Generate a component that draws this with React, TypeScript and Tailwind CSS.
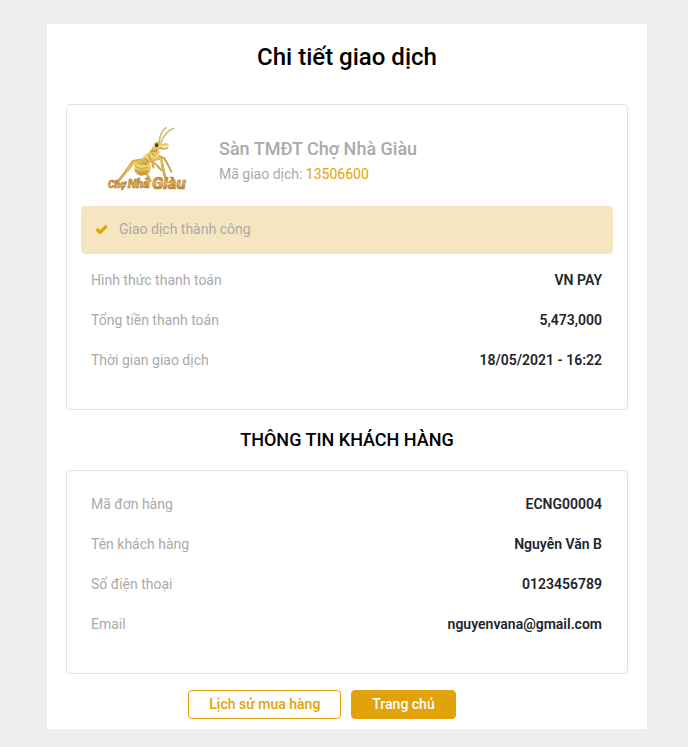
import React from "react";

type Detail = { label: string; value: string };

const payment: Detail[] = [
  { label: "Hình thức thanh toán", value: "VN PAY" },
  { label: "Tổng tiền thanh toán", value: "5,473,000" },
  { label: "Thời gian giao dịch", value: "18/05/2021 - 16:22" },
];

const customer: Detail[] = [
  { label: "Mã đơn hàng", value: "ECNG00004" },
  { label: "Tên khách hàng", value: "Nguyễn Văn B" },
  { label: "Số điện thoại", value: "0123456789" },
  { label: "Email", value: "nguyenvana@gmail.com" },
];

function DetailList({ items }: { items: Detail[] }) {
  return (
    <dl className="pr-[11px] pl-[10px]">
      {items.map((item) => (
        <div key={item.label} className="flex h-10 items-center justify-between">
          <dt className="text-[#aaaaaa]">{item.label}</dt>
          <dd className="font-semibold text-[#212529]">{item.value}</dd>
        </div>
      ))}
    </dl>
  );
}

function Logo() {
  return (
    <svg viewBox="0 0 330 255" className="h-[85px] w-[110px] shrink-0" role="img" aria-label="Chợ Nhà Giàu">
      <defs>
        <linearGradient id="gold" x1="0" y1="0" x2="0" y2="1">
          <stop offset="0" stopColor="#d9ae3c" />
          <stop offset="0.45" stopColor="#f3da80" />
          <stop offset="1" stopColor="#c4912f" />
        </linearGradient>
        <linearGradient id="word" x1="0" y1="0" x2="0" y2="1">
          <stop offset="0.2" stopColor="#c08a30" />
          <stop offset="0.55" stopColor="#e3bd66" />
          <stop offset="1" stopColor="#8f5a14" />
        </linearGradient>
      </defs>
      {/* antennae */}
      <g fill="none" stroke="#cdbb80" strokeWidth="5" strokeLinecap="round">
        <path d="M192 84 C194 62 200 46 213 38" />
        <path d="M198 82 C206 62 220 46 236 40" />
      </g>
      {/* far legs */}
      <g fill="none" stroke="#d0a748" strokeWidth="6" strokeLinecap="round" strokeLinejoin="round">
        <path d="M184 120 L208 130 L217 146 L229 170" />
        <path d="M168 136 L184 149 L198 165" />
        <path d="M170 139 L176 158" />
      </g>
      {/* near legs */}
      <g fill="none" stroke="#d3aa47" strokeWidth="8" strokeLinecap="round" strokeLinejoin="round">
        <path d="M146 134 L114 139 L91 172 L70 198" />
        <path d="M115 141 L98 164" strokeWidth="10" />
        <path d="M152 148 L142 157 L156 178 L166 198" />
        <path d="M176 134 L198 129 L203 157 L211 188" />
        <path d="M180 131 L197 129" strokeWidth="11" />
      </g>
      <g fill="none" stroke="#f3dc8b" strokeWidth="3" strokeLinecap="round">
        <path d="M138 137 L116 141 L97 166" />
        <path d="M178 132 L196 130 L200 148" />
        <path d="M146 160 L158 182" />
      </g>
      {/* abdomen */}
      <path d="M122 138 C111 158 117 180 139 182 C160 182 171 167 168 151 L151 132 Z" fill="url(#gold)" />
      <path d="M120 153 Q138 167 163 154 M121 166 Q138 177 160 168 M129 145 Q141 153 155 143" fill="none" stroke="#b98a30" strokeWidth="2" />
      {/* thorax */}
      <path d="M137 143 L146 121 L161 114 L166 106 L180 102 L194 111 L190 128 L168 141 L152 151 Z" fill="url(#gold)" />
      <path d="M148 130 L158 138 M160 118 L167 134 M169 113 L181 125" fill="none" stroke="#b58628" strokeWidth="3" />
      {/* head */}
      <path d="M166 110 L173 94 L179 83 L190 79 L201 87 L215 84 L222 91 L220 99 L207 103 L193 102 L184 112 Z" fill="url(#gold)" />
      <ellipse cx="185" cy="91" rx="5" ry="6" fill="#493716" />
      <path d="M202 96 L212 95 L217 91" fill="none" stroke="#f7efce" strokeWidth="5" />
      <path d="M193 99 L206 103 L219 99" fill="none" stroke="#a88036" strokeWidth="2" />
      {/* wordmark */}
      <g className="font-['Roboto',sans-serif] font-black italic" fill="url(#word)" stroke="#b98332" strokeWidth="2">
        <text x="39" y="220" fontSize="31">Chợ</text>
        <text x="98" y="220" fontSize="38">Nhà</text>
        <text x="171" y="221" fontSize="51">Giàu</text>
      </g>
    </svg>
  );
}

export default function App() {
  return (
    <div className="min-h-screen bg-[#eeeeee] py-6 pr-4 pl-[22px] font-['Roboto',sans-serif] text-sm">
      <main className="mx-auto max-w-[600px] bg-white px-[19px] pt-4 pb-[10px]">
        <h1 className="text-center text-2xl leading-[34px] font-medium text-black">Chi tiết giao dịch</h1>

        <section className="mt-[30px] rounded border border-[#dee2e6] px-[14px] pt-[10px] pb-[29px]">
          <div className="flex items-center pl-[14px]">
            <Logo />
            <div className="ml-[14px] pt-[7px] text-[#aaaaaa]">
              <h2 className="text-lg leading-[26px] font-medium">Sàn TMĐT Chợ Nhà Giàu</h2>
              <p className="leading-6">
                Mã giao dịch: <span className="text-[#e2a20a]">13506600</span>
              </p>
            </div>
          </div>
          <div role="status" className="my-[6px] flex h-12 items-center rounded bg-[#f6e6bf] px-[14px] pb-0.5 text-[#aaaaaa]">
            <svg viewBox="0 0 13 11" className="mr-[11px] h-[11px] w-[13px]" fill="none" aria-hidden="true">
              <path d="M1.5 5 L5 8.5 L11.5 2" stroke="#e2a20a" strokeWidth="3.2" />
            </svg>
            Giao dịch thành công
          </div>
          <DetailList items={payment} />
        </section>

        <h2 className="py-4 text-center text-lg leading-7 font-medium text-black">THÔNG TIN KHÁCH HÀNG</h2>

        <section className="rounded border border-[#dee2e6] px-[14px] pt-[13px] pb-[29px]">
          <DetailList items={customer} />
        </section>

        <div className="mt-4 flex flex-wrap justify-center gap-[10px] pr-[50px] font-medium">
          <button type="button" className="h-[29px] rounded border border-[#e2a20a] bg-white px-5 pb-0.5 text-[#e2a20a]">
            Lịch sử mua hàng
          </button>
          <button type="button" className="h-[29px] rounded border border-[#e2a20a] bg-[#e2a20a] px-5 pb-0.5 text-white">
            Trang chủ
          </button>
        </div>
      </main>
    </div>
  );
}
